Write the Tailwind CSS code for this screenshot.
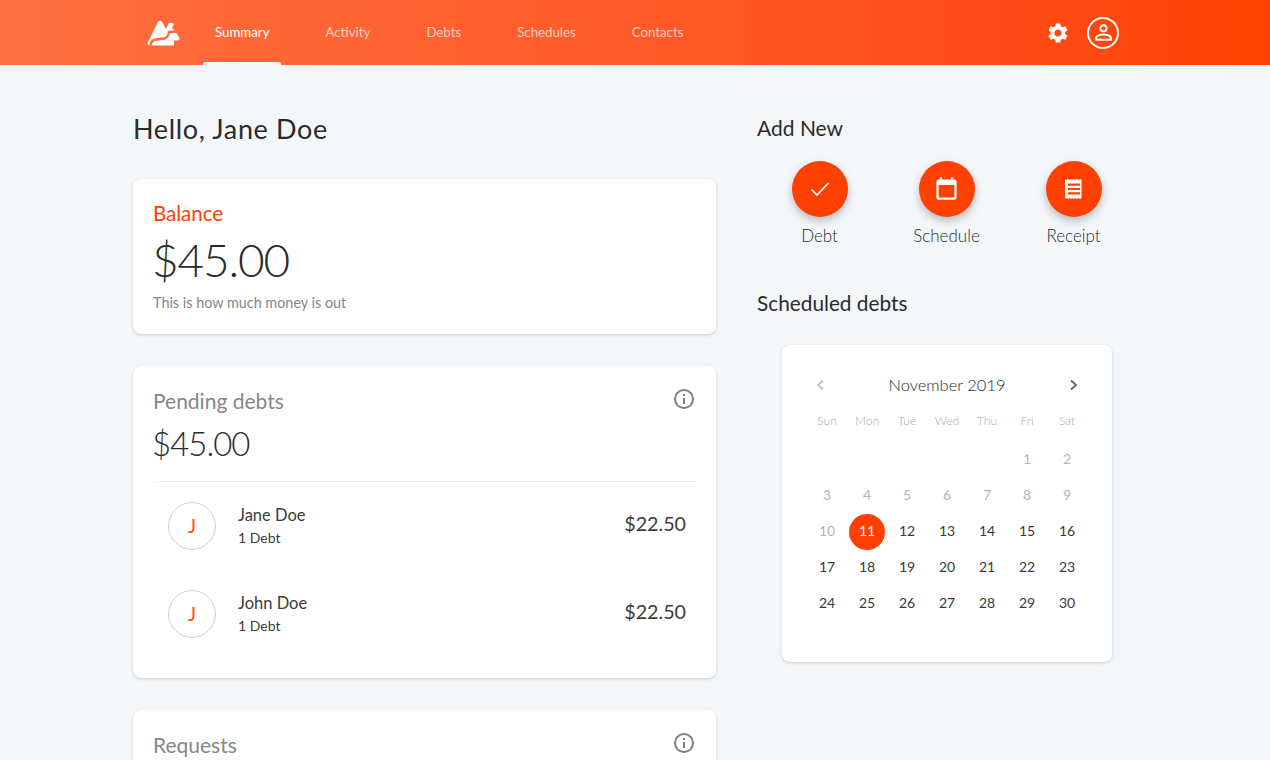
<!DOCTYPE html>
<html lang="en">
<head>
    <meta charset="UTF-8">
    <title>Summary</title>
    <script src="https://cdn.jsdelivr.net/npm/@tailwindcss/browser@4"></script>
</head>
<body class="bg-[#f4f7fa] font-['Lato',sans-serif] text-[#2b2b2b] h-[760px] overflow-hidden">
    <!-- top bar -->
    <header class="h-[65px] bg-gradient-to-r from-[#ff6f3f] to-[#ff4000] flex items-stretch pl-[147px] pr-[151px]">
        <svg class="w-[33px] h-[26px] mt-[20px]" viewBox="0 0 33 26" fill="#fff">
            <path d="M0.5 23 L11 2 Q13 -0.5 15 2 L19 9 L22 3 Q23.500 2 27 4 L25 8 L28 11 L32.500 18 Q33 20 31 20.500 L27 20.500 L27 25.500 L9 25.500 L2 25 Q0 25 0.500 23 Z"/>
            <path d="M3.500 25.500 Q4 20 9 19.500 L17 18.500 Q21.500 17.500 22 12 L29 11.500" fill="none" stroke="#ff6b3b" stroke-width="2.400"/>
        </svg>
        <nav class="flex ml-[23px] gap-[32px] text-[13.25px] text-white/70">
            <a class="relative px-3 flex items-center text-white">Summary<span class="absolute left-0 right-0 bottom-0 h-[3px] bg-[#f4f7fa] rounded-t-[2px]"></span></a>
            <a class="px-3 flex items-center">Activity</a>
            <a class="px-3 flex items-center">Debts</a>
            <a class="px-3 flex items-center">Schedules</a>
            <a class="px-3 flex items-center">Contacts</a>
        </nav>
        <div class="ml-auto flex items-center gap-[17px]">
            <svg class="w-[24px] h-[24px]" viewBox="0 0 24 24" fill="#fff"><path d="M19.14 12.94c.04-.3.06-.61.06-.94 0-.32-.02-.64-.07-.94l2.03-1.58c.18-.14.23-.41.12-.61l-1.92-3.32c-.12-.22-.37-.29-.59-.22l-2.39.96c-.5-.38-1.03-.7-1.62-.94l-.36-2.54c-.04-.24-.24-.41-.48-.41h-3.84c-.24 0-.43.17-.47.41l-.36 2.54c-.59.24-1.13.57-1.62.94l-2.39-.96c-.22-.08-.47 0-.59.22L2.74 8.87c-.12.21-.08.47.12.61l2.03 1.58c-.05.3-.09.63-.09.94s.02.64.07.94l-2.03 1.58c-.18.14-.23.41-.12.61l1.92 3.32c.12.22.37.29.59.22l2.39-.96c.5.38 1.03.7 1.62.94l.36 2.54c.05.24.24.41.48.41h3.84c.24 0 .44-.17.47-.41l.36-2.54c.59-.24 1.13-.56 1.62-.94l2.39.96c.22.08.47 0 .59-.22l1.92-3.32c.12-.22.07-.47-.12-.61l-2.01-1.58zM12 15.6c-1.98 0-3.6-1.62-3.6-3.6s1.62-3.6 3.6-3.6 3.6 1.62 3.6 3.6-1.62 3.6-3.6 3.6z"/></svg>
            <div class="w-[32px] h-[32px] rounded-full border-2 border-white flex items-center justify-center">
                <svg class="w-[25px] h-[25px] shrink-0" viewBox="0 0 24 24" fill="#fff"><path d="M12 5.900c1.160 0 2.100.940 2.100 2.100s-.940 2.100-2.100 2.100S9.900 9.160 9.900 8s.940-2.100 2.100-2.100m0 9c2.970 0 6.100 1.460 6.100 2.100v1.100H5.900V17c0-.640 3.130-2.100 6.100-2.100M12 4C9.790 4 8 5.790 8 8s1.790 4 4 4 4-1.790 4-4-1.790-4-4-4zm0 9c-2.670 0-8 1.340-8 4v3h16v-3c0-2.660-5.330-4-8-4z"/></svg>
            </div>
        </div>
    </header>

    <main class="flex pl-[133px] gap-[40px]">
        <!-- left column -->
        <section class="w-[583px] shrink-0">
            <h1 class="text-[27px] leading-[32px] mt-[48px] mb-[34px] tracking-[0.65px]">Hello, Jane Doe</h1>

            <div class="bg-white rounded-lg shadow-[0_1px_3px_rgba(60,70,90,0.25)] h-[155px] px-5 pt-[22px] mb-[32px]">
                <div class="text-[20.5px] leading-[24px] text-[#ff4000]">Balance</div>
                <div class="text-[46px] leading-[56px] font-light mt-[7px] -ml-[1px] tracking-[-1.2px]">$45.00</div>
                <div class="text-[14.4px] leading-[20px] text-[#85878a] mt-[5px]">This is how much money is out</div>
            </div>

            <div class="bg-white rounded-lg shadow-[0_1px_3px_rgba(60,70,90,0.25)] h-[312px] px-5 pt-[23px] mb-[32px]">
                <div class="flex justify-between">
                    <div class="text-[21px] leading-[24px] text-[#85878a]">Pending debts</div>
                    <svg class="w-[24px] h-[24px] -mt-[2px]" viewBox="0 0 24 24" fill="none" stroke="#7f7f7f" stroke-width="2"><circle cx="12" cy="12" r="9"/><path d="M12 11v6M12 7v2"/></svg>
                </div>
                <div class="text-[33px] leading-[44px] font-light mt-[8px] pb-[16px] border-b border-[#ececec] tracking-[-1px]"><span class="-ml-[1px]">$45.00</span></div>
                <div class="flex items-center h-[88px] pl-[15px] pr-[10px]">
                    <div class="w-[48px] h-[48px] rounded-full border border-[#cfcfcf] flex items-center justify-center text-[19px] text-[#ff4a1a]">J</div>
                    <div class="ml-[22px]">
                        <div class="text-[16.5px] leading-[22px] text-[#3c3c3c]">Jane Doe</div>
                        <div class="text-[14px] leading-[22px] text-[#3c3c3c] mt-[1px]">1 Debt</div>
                    </div>
                    <div class="ml-auto text-[19.7px] text-[#3c3c3c] pb-[4px]">$22.50</div>
                </div>
                <div class="flex items-center h-[88px] pl-[15px] pr-[10px]">
                    <div class="w-[48px] h-[48px] rounded-full border border-[#cfcfcf] flex items-center justify-center text-[19px] text-[#ff4a1a]">J</div>
                    <div class="ml-[22px]">
                        <div class="text-[16.5px] leading-[22px] text-[#3c3c3c]">John Doe</div>
                        <div class="text-[14px] leading-[22px] text-[#3c3c3c] mt-[1px]">1 Debt</div>
                    </div>
                    <div class="ml-auto text-[19.7px] text-[#3c3c3c] pb-[4px]">$22.50</div>
                </div>
            </div>

            <div class="bg-white rounded-t-lg shadow-[0_1px_3px_rgba(60,70,90,0.25)] h-[50px] px-5 pt-[23px] overflow-hidden">
                <div class="flex justify-between">
                    <div class="text-[21px] leading-[24px] text-[#85878a]">Requests</div>
                    <svg class="w-[24px] h-[24px] -mt-[2px]" viewBox="0 0 24 24" fill="none" stroke="#7f7f7f" stroke-width="2"><circle cx="12" cy="12" r="9"/><path d="M12 11v6M12 7v2"/></svg>
                </div>
            </div>
        </section>

        <!-- right column -->
        <aside class="w-[356px] shrink-0">
            <h2 class="text-[21px] leading-[26px] mt-[50px] pl-[1px]">Add New</h2>
            <div class="grid grid-cols-3 w-[381px] mt-[20px]">
                <div class="flex flex-col items-center w-[127px]">
                    <div class="w-[56px] h-[56px] rounded-full bg-[#ff4000] shadow-[0_4px_8px_rgba(0,0,0,0.25)] flex items-center justify-center">
                        <svg class="w-[24px] h-[24px]" viewBox="0 0 24 24" fill="none" stroke="#fff" stroke-width="1.700"><path d="M3.500 12.500l5.500 5.500L20.500 6"/></svg>
                    </div>
                    <div class="text-[17px] leading-[24px] mt-[7px] text-[#2b2b2b] font-light">Debt</div>
                </div>
                <div class="flex flex-col items-center w-[127px]">
                    <div class="w-[56px] h-[56px] rounded-full bg-[#ff4000] shadow-[0_4px_8px_rgba(0,0,0,0.25)] flex items-center justify-center">
                        <svg class="w-[27px] h-[27px]" viewBox="0 0 24 24" fill="#fff"><path d="M19 3h-1V1h-2v2H8V1H6v2H5C3.900 3 3 3.900 3 5v14c0 1.100.900 2 2 2h14c1.100 0 2-.900 2-2V5c0-1.100-.900-2-2-2zm0 16H5V8h14v11z"/></svg>
                    </div>
                    <div class="text-[17px] leading-[24px] mt-[7px] text-[#2b2b2b] font-light">Schedule</div>
                </div>
                <div class="flex flex-col items-center w-[127px]">
                    <div class="w-[56px] h-[56px] rounded-full bg-[#ff4000] shadow-[0_4px_8px_rgba(0,0,0,0.25)] flex items-center justify-center">
                        <svg class="w-[24px] h-[24px]" viewBox="0 0 24 24" fill="#fff"><path d="M3 2l1.500 1 1.500-1 1.500 1 1.500-1 1.500 1 1.500-1 1.500 1 1.500-1 1.500 1 1.500-1 1.500 1 0 0V21l-1.500 1-1.500-1-1.500 1-1.500-1-1.500 1-1.500-1-1.500 1-1.500-1-1.500 1-1.500-1-1.500 1z"/><path d="M6 6.500h12v2.200H6zM6 10.900h12v2.200H6zM6 15.300h12v2.200H6z" fill="#ff4000"/></svg>
                    </div>
                    <div class="text-[17px] leading-[24px] mt-[7px] text-[#2b2b2b] font-light">Receipt</div>
                </div>
            </div>

            <h2 class="text-[20.8px] leading-[26px] mt-[42px] pl-[1px]">Scheduled debts</h2>

            <div class="ml-[26px] mt-[29px] w-[330px] h-[317px] bg-white rounded-lg shadow-[0_1px_3px_rgba(60,70,90,0.25)] px-[25px] pt-[28px]">
                <div class="flex items-center justify-between h-[24px] px-[1px]">
                    <svg class="w-[24px] h-[24px]" viewBox="0 0 24 24" fill="none" stroke="#c4c4c4" stroke-width="2"><path d="M15 7.500l-5 4.500 5 4.500"/></svg>
                    <div class="text-[16.5px] font-light text-[#2b2b2b]">November 2019</div>
                    <svg class="w-[24px] h-[24px]" viewBox="0 0 24 24" fill="none" stroke="#6e6e6e" stroke-width="2"><path d="M9 7.500l5 4.500-5 4.500"/></svg>
                </div>
                <div class="grid grid-cols-7 text-center text-[12px] leading-[20px] text-[#a8a8a8] mt-[14px] mb-[10px] font-light">
                    <div>Sun</div><div>Mon</div><div>Tue</div><div>Wed</div><div>Thu</div><div>Fri</div><div>Sat</div>
                </div>
                <div class="grid grid-cols-7 auto-rows-[36px] text-center text-[14px] leading-[36px] text-[#3a3a3a]">
                    <div></div><div></div><div></div><div></div><div></div>
                    <div class="text-[#b5b5b5]">1</div><div class="text-[#b5b5b5]">2</div>
                    <div class="text-[#b5b5b5]">3</div><div class="text-[#b5b5b5]">4</div><div class="text-[#b5b5b5]">5</div><div class="text-[#b5b5b5]">6</div><div class="text-[#b5b5b5]">7</div><div class="text-[#b5b5b5]">8</div><div class="text-[#b5b5b5]">9</div>
                    <div class="text-[#b5b5b5]">10</div>
                    <div class="flex items-center justify-center"><span class="w-[36px] h-[36px] mt-[2px] leading-[34px] shrink-0 rounded-full bg-[#ff4000] text-white">11</span></div>
                    <div>12</div><div>13</div><div>14</div><div>15</div><div>16</div>
                    <div>17</div><div>18</div><div>19</div><div>20</div><div>21</div><div>22</div><div>23</div>
                    <div>24</div><div>25</div><div>26</div><div>27</div><div>28</div><div>29</div><div>30</div>
                </div>
            </div>
        </aside>
    </main>
</body>
</html>
